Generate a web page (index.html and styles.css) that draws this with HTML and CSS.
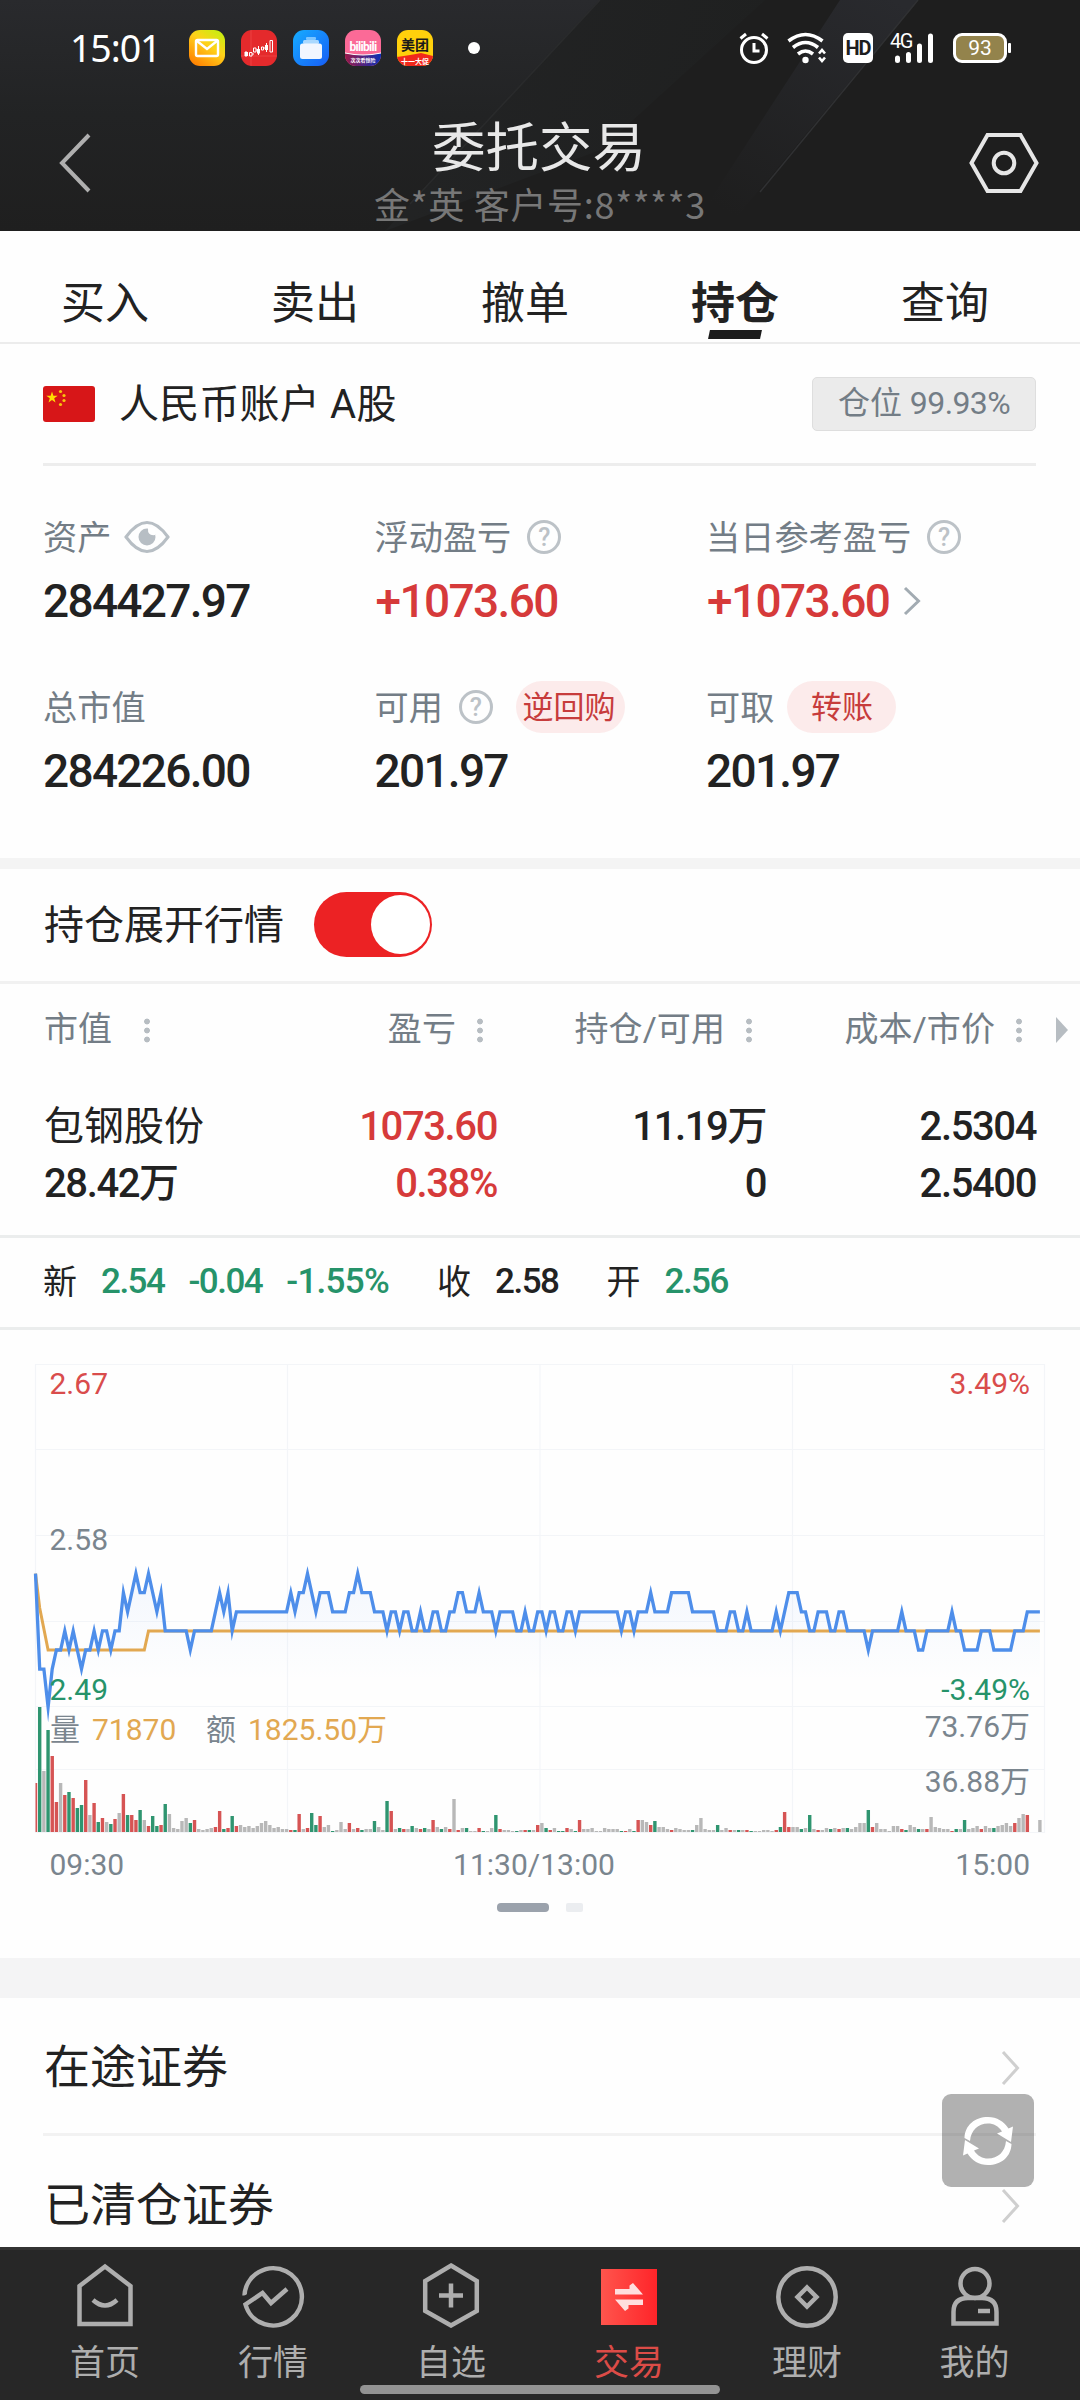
FILE: index.html
```
<!DOCTYPE html>
<html lang="zh-CN">
<head>
    <meta charset="UTF-8">
    <meta name="viewport" content="width=device-width, initial-scale=1.0">
    <title>委托交易</title>
    <link rel="stylesheet" href="styles.css">
</head>
<body>
    <div class="app">
        <header class="header">
            <svg class="header-bg" viewBox="0 0 1080 231" preserveAspectRatio="none">
                <defs>
                    <linearGradient id="bgTop" x1="0" y1="0" x2="0" y2="1">
                        <stop offset="0" stop-color="#292a2d"/>
                        <stop offset="0.5" stop-color="#222324"/>
                        <stop offset="1" stop-color="#1f1f1f"/>
                    </linearGradient>
                    <linearGradient id="bgMid" x1="0" y1="0" x2="1" y2="0.2">
                        <stop offset="0" stop-color="#232425"/>
                        <stop offset="1" stop-color="#1f2020"/>
                    </linearGradient>
                    <linearGradient id="bgRay" x1="0.9" y1="0" x2="0.3" y2="1">
                        <stop offset="0" stop-color="#292a2e"/>
                        <stop offset="1" stop-color="#1e1e1e"/>
                    </linearGradient>
                </defs>
                <rect width="1080" height="231" fill="#1e1e1e"/>
                <path d="M0 0H600L385 231H0Z" fill="url(#bgTop)"/>
                <path d="M600 0H765L600 150L385 231Z" fill="url(#bgMid)"/>
                <path d="M840 0H918L725 231H690Z" fill="url(#bgRay)"/>
                <path d="M918 0L760 192" stroke="#303133" stroke-width="1.5" fill="none"/>
                <path d="M600 0L410 204" stroke="#2a2b2c" stroke-width="1.5" fill="none"/>
            </svg>

            <div class="status-bar">
                <span class="status-time">15:01</span>
                <div class="status-apps">
                    <svg width="36" height="36" viewBox="0 0 36 36">
                        <defs>
                            <linearGradient id="mailBg" x1="0.1" y1="1" x2="0.8" y2="0">
                                <stop offset="0" stop-color="#ff7a00"/>
                                <stop offset="0.6" stop-color="#ffd21a"/>
                                <stop offset="1" stop-color="#c8ee10"/>
                            </linearGradient>
                        </defs>
                        <rect width="36" height="36" rx="11" fill="url(#mailBg)"/>
                        <rect x="7" y="10" width="22" height="16" rx="1.500" fill="none" stroke="#fff" stroke-width="2.400"/>
                        <path d="M8 11L18 19L28 11" fill="none" stroke="#fff" stroke-width="2.400"/>
                    </svg>
                    <svg width="36" height="36" viewBox="0 0 36 36">
                        <rect width="36" height="36" rx="11" fill="#e42a2c"/>
                        <path d="M10 0V36M0 26H36" stroke="#f04c4c" stroke-width="0.700"/>
                        <path d="M5 21V27M17.500 16V25M25.500 13V22M11 24H13M14.500 20H17M22.500 18H25" stroke="#fff" fill="none"/>
                        <path d="M3.500 22H7V26H3.500ZM16 19H19V23.500H16ZM24 15H27V20H24Z" fill="#fff"/>
                        <path d="M8.500 22.500H11V26H8.500ZM12.500 18H15V22H12.500ZM20.500 17H22.500V20H20.500ZM29 10.500H31.500V22H29Z" fill="#e42a2c" stroke="#fff"/>
                    </svg>
                    <svg width="36" height="36" viewBox="0 0 36 36">
                        <defs>
                            <linearGradient id="fileBg" x1="0" y1="0" x2="1" y2="1">
                                <stop offset="0" stop-color="#16adff"/>
                                <stop offset="1" stop-color="#175df6"/>
                            </linearGradient>
                        </defs>
                        <rect width="36" height="36" rx="11" fill="url(#fileBg)"/>
                        <rect x="13" y="7" width="10" height="3" rx="1" fill="#7cc5ff"/>
                        <rect x="10" y="10" width="16" height="4" rx="1.500" fill="#a9d8ff"/>
                        <rect x="7" y="13.500" width="22" height="15.500" rx="2.500" fill="#f1f6ff"/>
                    </svg>
                    <svg width="36" height="36" viewBox="0 0 36 36">
                        <defs>
                            <linearGradient id="biliBg" x1="0" y1="0" x2="1" y2="0">
                                <stop offset="0" stop-color="#9a1848"/>
                                <stop offset="1" stop-color="#0b30b5"/>
                            </linearGradient>
                            <clipPath id="biliClip"><rect width="36" height="36" rx="11"/></clipPath>
                        </defs>
                        <g clip-path="url(#biliClip)">
                            <rect width="36" height="36" fill="#fb6a97"/>
                            <path d="M0 23Q18 27 36 23V36H0Z" fill="url(#biliBg)"/>
                            <path d="M0 23Q18 27 36 23" fill="none" stroke="#fff"/>
                        </g>
                        <text class="app-bili" x="18" y="20.500" text-anchor="middle">bilibili</text>
                        <text class="app-bili-sub" x="18" y="32" text-anchor="middle">次次看惊险</text>
                    </svg>
                    <svg width="36" height="36" viewBox="0 0 36 36">
                        <defs>
                            <clipPath id="mtClip"><rect width="36" height="36" rx="11"/></clipPath>
                        </defs>
                        <g clip-path="url(#mtClip)">
                            <rect width="36" height="36" fill="#ffd00c"/>
                            <path d="M0 27Q14 25 24 23L36 26V36H0Z" fill="#f1281c"/>
                        </g>
                        <text class="app-mt" x="18" y="19.500" text-anchor="middle">美团</text>
                        <text class="app-mt-sub" x="18" y="33.500" text-anchor="middle">十一大促</text>
                    </svg>
                </div>
                <span class="status-dot"></span>

                <div class="status-right">
                    <svg width="30" height="32" viewBox="0 0 30 32">
                        <g fill="none" stroke="#fff" stroke-width="3">
                            <circle cx="15" cy="18" r="12.500"/>
                            <path d="M1.500 6.500L7 2M28.500 6.500L23 2M15 11V19H20.500"/>
                        </g>
                    </svg>
                    <svg class="icon-wifi" width="40" height="32" viewBox="0 0 40 32">
                        <g fill="none" stroke="#fff" stroke-width="3.600">
                            <path d="M1.500 9Q18.500 -4 35.500 9"/>
                            <path d="M6 15.500Q18.500 5.500 31 15.500"/>
                            <path d="M11 22Q18.500 16 26 22"/>
                            <path d="M32 21.500L35 18L38 21.500M32 25.500L35 29L38 25.500" stroke-width="2.600"/>
                        </g>
                        <circle cx="18.500" cy="28" r="3.200" fill="#fff"/>
                    </svg>
                    <span class="icon-hd">HD</span>
                    <span class="signal">
                        <span class="signal-text">4G</span>
                        <svg width="46" height="32" viewBox="0 0 46 32">
                            <path d="M8.500 28.500V26M19.500 28.500V22.500M30.500 28.500V14M41.500 28.500V4" stroke="#fff" stroke-width="5" stroke-linecap="round"/>
                        </svg>
                    </span>
                    <span class="battery">93</span>
                    <span class="battery-tip"></span>
                </div>
            </div>

            <div class="title-bar">
                <svg width="34" height="62" viewBox="0 0 34 62">
                    <path d="M31 3L4 31L31 59" fill="none" stroke="#afafaf" stroke-width="4"/>
                </svg>
                <div class="title-text">
                    <h1>委托交易</h1>
                    <p>金*英 客户号:8****3</p>
                </div>
                <svg width="70" height="62" viewBox="0 0 70 62">
                    <g fill="none" stroke="#e6e6e6" stroke-width="4">
                        <path d="M18.500 3H51.500L67.500 31L51.500 59H18.500L2.500 31Z"/>
                        <circle cx="35" cy="31" r="10.300"/>
                    </g>
                </svg>
            </div>
        </header>

        <nav class="tabs">
            <a class="tab">买入</a>
            <a class="tab">卖出</a>
            <a class="tab">撤单</a>
            <a class="tab active">持仓</a>
            <a class="tab">查询</a>
        </nav>

        <section class="account">
            <div class="account-head">
                <svg width="52" height="36" viewBox="0 0 52 36">
                    <rect width="52" height="36" rx="3" fill="#d71618"/>
                    <path d="M9 5.500L10.400 9.700H14.700L11.200 12.300L12.500 16.500L9 13.900L5.500 16.500L6.800 12.300L3.300 9.700H7.600Z" fill="#ffde00"/>
                    <g fill="#f9c50e">
                        <circle cx="17.500" cy="5.500" r="1.600"/>
                        <circle cx="21" cy="9.500" r="1.600"/>
                        <circle cx="21" cy="14.500" r="1.600"/>
                        <circle cx="17.500" cy="18.500" r="1.600"/>
                    </g>
                </svg>
                <span class="account-name">人民币账户 A股</span>
                <span class="position-badge">仓位 <b>99.93%</b></span>
            </div>

            <div class="totals">
                <div class="total">
                    <div class="total-label">
                        <span>资产</span>
                        <svg class="icon-eye" width="46" height="32" viewBox="0 0 46 32">
                            <path d="M2 16Q23 -13 44 16Q23 45 2 16Z" fill="none" stroke="#b7bec4" stroke-width="3"/>
                            <circle cx="23" cy="16" r="8.500" fill="#b7bec4"/>
                            <path d="M24 8Q23.500 15 31 14V7H24Z" fill="#fff"/>
                        </svg>
                    </div>
                    <div class="total-value">284427.97</div>
                </div>
                <div class="total">
                    <div class="total-label"><span>浮动盈亏</span><i class="help">?</i></div>
                    <div class="total-value up">+1073.60</div>
                </div>
                <div class="total">
                    <div class="total-label"><span>当日参考盈亏</span><i class="help">?</i></div>
                    <div class="total-value up">+1073.60
                        <svg class="icon-more" width="18" height="30" viewBox="0 0 18 30">
                            <path d="M2 2L15.500 15L2 28" fill="none" stroke="#a2abb2" stroke-width="3"/>
                        </svg>
                    </div>
                </div>
                <div class="total">
                    <div class="total-label"><span>总市值</span></div>
                    <div class="total-value">284226.00</div>
                </div>
                <div class="total">
                    <div class="total-label"><span>可用</span><i class="help">?</i><b class="pill pill-repo">逆回购</b></div>
                    <div class="total-value">201.97</div>
                </div>
                <div class="total">
                    <div class="total-label"><span>可取</span><b class="pill">转账</b></div>
                    <div class="total-value">201.97</div>
                </div>
            </div>
        </section>

        <section class="positions">
            <div class="expand-row">
                <span>持仓展开行情</span>
                <i class="switch"></i>
            </div>

            <div class="pos-row pos-head">
                <span class="col-first">市值<i class="dots"></i></span>
                <span>盈亏<i class="dots"></i></span>
                <span>持仓/可用<i class="dots"></i></span>
                <span>成本/市价<i class="dots"></i></span>
                <i class="arrow-right"></i>
            </div>
            <div class="pos-body">
                <div class="pos-row">
                    <span class="col-first stock-name">包钢股份</span>
                    <span class="up">1073.60</span>
                    <span>11.19万</span>
                    <span>2.5304</span>
                </div>
                <div class="pos-row">
                    <span class="col-first">28.42万</span>
                    <span class="up">0.38%</span>
                    <span>0</span>
                    <span>2.5400</span>
                </div>
            </div>

            <div class="quote">
                <span>新</span>
                <b class="down">2.54</b>
                <b class="down">-0.04</b>
                <b class="down quote-pct">-1.55%</b>
                <span class="quote-label">收</span>
                <b>2.58</b>
                <span class="quote-label">开</span>
                <b class="down">2.56</b>
            </div>
        </section>

        <section class="chart-panel">
            <svg id="chart" class="chart" width="1080" height="560" viewBox="0 1330 1080 560">
                <defs>
                    <linearGradient id="areaFill" x1="0" y1="0" x2="0" y2="1">
                        <stop offset="0" stop-color="#4a8af0" stop-opacity="0.06"/>
                        <stop offset="0.8" stop-color="#4a8af0" stop-opacity="0"/>
                    </linearGradient>
                </defs>
                <g class="grid-lines">
                    <path d="M35.500 1364.500H1044.500V1832.500H35.500Z"/>
                    <path d="M35.500 1449.500H1044.500M35.500 1535.500H1044.500M35.500 1621.500H1044.500M35.500 1706.500H1044.500M35.500 1769.500H1044.500"/>
                    <path d="M287.500 1364.500V1832.500M540 1364.500V1832.500M792.500 1364.500V1832.500"/>
                </g>
                <g id="volumeBars"></g>
                <path id="areaPath" fill="url(#areaFill)"/>
                <polyline id="avgLine" class="avg-line"/>
                <polyline id="priceLine" class="price-line"/>
                <g class="chart-text">
                    <text class="up" x="49.500" y="1393.500">2.67</text>
                    <text x="49.500" y="1549.500">2.58</text>
                    <text class="down" x="49.500" y="1699.500">2.49</text>
                    <text x="50" y="1740">量</text>
                    <text class="gold" x="92" y="1740">71870</text>
                    <text x="206" y="1740">额</text>
                    <text class="gold" x="248" y="1740">1825.50万</text>
                    <text x="49.500" y="1875">09:30</text>
                    <text x="534" y="1875" text-anchor="middle">11:30/13:00</text>
                    <g text-anchor="end">
                        <text class="up" x="1030" y="1393.500">3.49%</text>
                        <text class="down" x="1030" y="1699.500">-3.49%</text>
                        <text x="1030" y="1737">73.76万</text>
                        <text x="1030" y="1791.500">36.88万</text>
                        <text x="1030" y="1875">15:00</text>
                    </g>
                </g>
            </svg>
            <div class="pager">
                <span class="page current"></span>
                <span class="page"></span>
            </div>
        </section>

        <section class="links">
            <a class="link-row">
                <span>在途证券</span>
                <svg width="19" height="36" viewBox="0 0 19 36">
                    <path d="M2 2L16.500 18L2 34" fill="none" stroke="#cfcfcf" stroke-width="3"/>
                </svg>
            </a>
            <a class="link-row">
                <span>已清仓证券</span>
                <svg width="19" height="36" viewBox="0 0 19 36">
                    <path d="M2 2L16.500 18L2 34" fill="none" stroke="#cfcfcf" stroke-width="3"/>
                </svg>
            </a>
        </section>

        <button class="refresh">
            <svg width="54" height="50" viewBox="0 0 54 50">
                <g fill="#fff">
                    <path d="M3.500 22C4 9 14 1 27 1C36 1 43 5.500 47.500 12.500L52 10.500L50 26L36 17.500L41 15.500C37.500 10 32.500 7.500 27 7.500C17 7.500 10 14 9 25Z"/>
                    <path d="M50.500 28C50 41 40 49 27 49C18 49 11 44.500 6.500 37.500L2 39.500L4 24L18 32.500L13 34.500C16.500 40 21.500 42.500 27 42.500C37 42.500 44 36 45 25Z"/>
                </g>
            </svg>
        </button>

        <footer class="tabbar">
            <a class="tabbar-item">
                <svg width="64" height="66" viewBox="0 0 64 66">
                    <g fill="none" stroke="#aeaeae" stroke-width="4.500">
                        <path d="M6.500 24L32 4.500L57.500 24V62H6.500Z"/>
                        <path d="M20 38Q32 49 44 38"/>
                    </g>
                </svg>
                首页
            </a>
            <a class="tabbar-item">
                <svg width="64" height="66" viewBox="0 0 64 66">
                    <g fill="none" stroke="#aeaeae" stroke-width="4.500">
                        <path d="M3.500 33.500A28.700 28.700 0 1 1 4.500 42.500L21.500 31L30 41L46 27"/>
                    </g>
                    <path d="M0 36L7 31.500V37L0 42Z" fill="#272727"/>
                </svg>
                行情
            </a>
            <a class="tabbar-item">
                <svg width="64" height="66" viewBox="0 0 64 66">
                    <g fill="none" stroke="#aeaeae" stroke-width="4.500">
                        <path d="M32 3.500L57.800 19V49L32 63.500L6.200 49V19Z"/>
                        <path d="M32 21.500V45.500M20 33.500H44"/>
                    </g>
                </svg>
                自选
            </a>
            <a class="tabbar-item active">
                <svg width="64" height="66" viewBox="0 0 64 66">
                    <defs>
                        <linearGradient id="tradeBg" x1="0" y1="0" x2="1" y2="0">
                            <stop offset="0" stop-color="#ff554d"/>
                            <stop offset="1" stop-color="#ff2429"/>
                        </linearGradient>
                    </defs>
                    <rect x="4" y="7" width="56" height="56" fill="url(#tradeBg)"/>
                    <path d="M18 27H32.500V23.500L36 21L46 32.500H18ZM46 43H31.500V46.500L28 49L18 37.500H46Z" fill="#ffdede"/>
                </svg>
                交易
            </a>
            <a class="tabbar-item">
                <svg width="64" height="66" viewBox="0 0 64 66">
                    <g fill="none" stroke="#aeaeae" stroke-width="4.500">
                        <circle cx="32" cy="35" r="28.700"/>
                        <path d="M32 25.500L41.500 35L32 44.500L22.500 35Z"/>
                    </g>
                </svg>
                理财
            </a>
            <a class="tabbar-item">
                <svg width="64" height="66" viewBox="0 0 64 66">
                    <g fill="none" stroke="#aeaeae" stroke-width="4.500">
                        <circle cx="32" cy="21.500" r="14.500"/>
                        <path d="M10.500 61.500V50Q10.500 36 25 36H39Q53.500 36 53.500 50V61.500Z"/>
                        <path d="M35 49H47"/>
                    </g>
                </svg>
                我的
            </a>
            <span class="home-indicator"></span>
        </footer>
    </div>

    <script src="chart.js"></script>
</body>
</html>
```
FILE: styles.css
```
* {
    margin: 0;
    padding: 0;
    box-sizing: border-box;
}

body {
    width: 1080px;
    height: 2400px;
    overflow: hidden;
    background: #fefefe;
    color: #222;
    font-family: Roboto, "Noto Sans CJK SC", sans-serif;
}

svg {
    display: block;
    flex: none;
}

i {
    font-style: normal;
}

.app {
    position: relative;
    display: flex;
    flex-direction: column;
    height: 2400px;
}

.up {
    color: #d63a3a;
    fill: #d94c4c;
}

.down {
    color: #26936a;
    fill: #26936a;
}

/* header */
.header {
    position: relative;
    height: 231px;
    flex: none;
}

.header-bg {
    position: absolute;
    width: 1080px;
    height: 231px;
    z-index: -1;
}

.status-bar {
    display: flex;
    align-items: center;
    height: 96px;
    padding: 0 69px 0 70px;
}

.status-time {
    width: 119px;
    padding-bottom: 2px;
    color: #fff;
    font-family: "Noto Sans", sans-serif;
    font-size: 37.5px;
    letter-spacing: -1.1px;
}

.status-apps {
    display: flex;
    gap: 16px;
}

.app-bili {
    font-size: 12px;
    font-weight: 700;
    fill: #fff;
    letter-spacing: -0.7px;
}

.app-bili-sub {
    font-size: 5px;
    font-weight: 700;
    fill: #fff;
}

.app-mt {
    font-size: 14px;
    font-weight: 700;
    fill: #1a1a1a;
}

.app-mt-sub {
    font-size: 7px;
    font-weight: 700;
    fill: #fff;
}

.status-dot {
    width: 12px;
    height: 12px;
    margin-left: 35px;
    border-radius: 50%;
    background: #fff;
}

.status-right {
    display: flex;
    align-items: center;
    margin-left: auto;
}

.icon-wifi {
    margin-left: 18px;
}

.icon-hd {
    width: 30px;
    height: 30px;
    margin-left: 16px;
    border-radius: 5px;
    background: #fff;
    color: #1e1e1e;
    font-size: 20px;
    font-weight: 700;
    line-height: 31px;
    text-align: center;
    letter-spacing: -1px;
}

.signal {
    position: relative;
    margin-left: 16px;
}

.signal-text {
    position: absolute;
    left: 1px;
    top: -3px;
    color: #fff;
    font-size: 20px;
    line-height: 24px;
    letter-spacing: -1.5px;
}

.battery {
    width: 54px;
    height: 30px;
    margin-left: 18px;
    border: 3px solid #fff;
    border-radius: 9px;
    background: #93834c;
    color: #fff;
    font-size: 21px;
    line-height: 25px;
    text-align: center;
}

.battery-tip {
    width: 3px;
    height: 10px;
    margin-left: 1px;
    border-radius: 1px;
    background: #fff;
}

.title-bar {
    display: flex;
    justify-content: space-between;
    align-items: center;
    height: 134px;
    padding: 0 41px 0 58px;
}

.title-text {
    margin-left: 19px;
    padding-top: 19px;
    text-align: center;
}

.title-text h1 {
    color: #e8e8e8;
    font-size: 53.5px;
    font-weight: 400;
    line-height: 60px;
    margin-right: 2px;
}

.title-text p {
    color: #777;
    font-family: "Noto Sans CJK SC", sans-serif;
    font-size: 36px;
    line-height: 48px;
    letter-spacing: 0.7px;
}

/* tabs */
.tabs {
    display: flex;
    height: 113px;
    padding-top: 35px;
    border-bottom: 2px solid #ececec;
    flex: none;
}

.tab {
    position: relative;
    width: 210px;
    font-size: 44px;
    line-height: 76px;
    text-align: center;
}

.tab.active {
    font-weight: 700;
}

.tab.active::after {
    content: "";
    position: absolute;
    left: 79px;
    bottom: 3px;
    width: 52px;
    height: 9px;
    background: #1c1c1c;
    transform: skewX(-12deg);
}

/* account */
.account {
    height: 514px;
    flex: none;
}

.account-head {
    display: flex;
    align-items: center;
    height: 122px;
    margin: 0 44px 0 43px;
    border-bottom: 3px solid #ededed;
}

.account-name {
    margin-left: 24px;
    padding-bottom: 5px;
    font-size: 40px;
    letter-spacing: 0.2px;
}

.position-badge {
    width: 224px;
    height: 54px;
    margin-left: auto;
    border: 1px solid #dedede;
    border-radius: 5px;
    background: #ebebeb;
    color: #737d86;
    font-size: 32px;
    line-height: 51px;
    text-align: center;
}

.position-badge b {
    font-weight: 400;
    letter-spacing: -0.6px;
}

.totals {
    display: grid;
    grid-template-columns: repeat(3, 331.5px);
    grid-auto-rows: 170px;
    padding: 43px 0 0 43px;
}

.total-label {
    display: flex;
    align-items: center;
    height: 56px;
    color: #737d86;
    font-size: 34.2px;
}

.total-label span {
    padding-bottom: 5px;
}

.total-value {
    display: flex;
    align-items: center;
    height: 72px;
    font-size: 46px;
    font-weight: 500;
    letter-spacing: -1.7px;
}

.total-value.up {
    padding-left: 1px;
    letter-spacing: -1.6px;
}

.icon-eye {
    margin-left: 13px;
}

.icon-more {
    margin-left: 14px;
}

.help {
    width: 34px;
    height: 34px;
    margin-left: 16px;
    border: 3px solid #bcc2c7;
    border-radius: 50%;
    color: #bcc2c7;
    font-size: 25px;
    font-weight: 500;
    line-height: 29px;
    text-align: center;
}

.pill {
    width: 109px;
    height: 52px;
    margin-left: 13px;
    border-radius: 26px;
    background: #fcebeb;
    color: #c73c3c;
    font-size: 31px;
    font-weight: 400;
    line-height: 53px;
    text-align: center;
}

.pill-repo {
    margin-left: 23px;
    padding-right: 3px;
}

/* positions */
.positions {
    height: 472px;
    border-top: 11px solid #f4f4f4;
    flex: none;
}

.expand-row {
    display: flex;
    align-items: center;
    height: 115px;
    padding: 0 0 1px 44px;
    border-bottom: 3px solid #f1f1f1;
    font-size: 40px;
}

.expand-row span {
    padding-bottom: 5px;
}

.switch {
    width: 118px;
    height: 65px;
    margin-left: 30px;
    padding: 3px 2px 3px 3px;
    border-radius: 33px;
    background: #ec2224;
}

.switch::after {
    content: "";
    display: block;
    width: 59px;
    height: 59px;
    margin-left: auto;
    border-radius: 50%;
    background: #fff;
}

.pos-row {
    display: grid;
    grid-template-columns: 153px 300px 269px 270px;
    padding-left: 44px;
    text-align: right;
    font-size: 40px;
    font-weight: 500;
    line-height: 57px;
    letter-spacing: -1.4px;
}

.pos-row .col-first {
    text-align: left;
    white-space: nowrap;
}

.pos-row .stock-name {
    font-weight: 400;
    letter-spacing: 0;
}

.pos-head {
    position: relative;
    height: 92px;
    color: #737d86;
    font-size: 34px;
    font-weight: 400;
    line-height: 90px;
    letter-spacing: 0.1px;
}

.dots {
    display: inline-block;
    width: 6px;
    height: 25px;
    margin-left: 21px;
    margin-right: 14px;
    vertical-align: -2px;
    background: radial-gradient(circle, #b7bdc2 2.5px, transparent 3.3px) 0 -1px / 6px 9px;
}

.col-first .dots {
    margin-left: 32px;
}

.arrow-right {
    position: absolute;
    left: 1056px;
    top: 33px;
    border: solid transparent;
    border-width: 13px 0 13px 12px;
    border-left-color: #b7bdc2;
}

.pos-body {
    height: 162px;
    padding-top: 22px;
    border-bottom: 3px solid #ebeded;
}

.quote {
    display: flex;
    align-items: center;
    gap: 24px;
    height: 92px;
    padding: 0 0 3px 43px;
    border-bottom: 3px solid #ebeded;
    font-size: 34px;
}

.quote span {
    padding-bottom: 3px;
}

.quote b {
    font-weight: 500;
    font-size: 35px;
    letter-spacing: -1.5px;
}

.quote .quote-pct {
    letter-spacing: -0.7px;
}

.quote-label {
    margin-left: 24px;
}

/* chart */
.chart-panel {
    height: 668px;
    border-bottom: 40px solid #f4f4f5;
    flex: none;
}

.grid-lines {
    fill: none;
    stroke: #f3f5f8;
    stroke-width: 1.2;
}

.price-line {
    fill: none;
    stroke: #4e8eea;
    stroke-width: 3.3;
    stroke-miterlimit: 10;
}

.avg-line {
    fill: none;
    stroke: #e2a851;
    stroke-width: 3;
}

.chart-text {
    font-size: 30px;
    fill: #7a858e;
}

.gold {
    fill: #e2a851;
}

.bar-up {
    fill: #d65454;
}

.bar-down {
    fill: #2f9570;
}

.bar-flat {
    fill: #b8b8b8;
}

.pager {
    display: flex;
    gap: 17px;
    padding: 13px 0 0 497px;
}

.page {
    width: 17px;
    height: 9px;
    border-radius: 2px;
    background: #ebedf0;
}

.page.current {
    width: 52px;
    border-radius: 4px;
    background: #9ba2ac;
}

/* links */
.links {
    padding: 0 44px 0 43px;
    height: 249px;
    overflow: hidden;
    flex: none;
}

.link-row {
    display: flex;
    justify-content: space-between;
    align-items: center;
    height: 138px;
    padding: 4px 16px 0 1px;
    border-bottom: 3px solid #f2f2f2;
    font-size: 46px;
}

.link-row span {
    padding-bottom: 10px;
}

.refresh {
    position: absolute;
    left: 942px;
    top: 2094px;
    display: flex;
    align-items: center;
    justify-content: center;
    width: 92px;
    height: 93px;
    border: none;
    border-radius: 9px;
    background: rgba(0, 0, 0, 0.3);
}

/* bottom bar */
.tabbar {
    position: relative;
    display: grid;
    grid-template-columns: 158px repeat(4, 178px) 157px;
    height: 153px;
    padding: 12px 26px 0;
    border-top: 3px solid #333;
    background: #272727;
}

.tabbar-item {
    display: flex;
    flex-direction: column;
    align-items: center;
    gap: 11px;
    color: #aeaeae;
    font-size: 35px;
    line-height: 50px;
}

.tabbar-item.active {
    color: #dc4c47;
}

.home-indicator {
    position: absolute;
    left: 360px;
    bottom: 6px;
    width: 360px;
    height: 9px;
    border-radius: 5px;
    background: #939393;
}
```
FILE: chart.js
```
// 分时图：价格以 [分钟, 价格] 记录拐点
const price = [
    [0, 2.56], [1, 2.51], [2, 2.51], [3, 2.49], [4, 2.51], [5, 2.52], [6, 2.52], [7, 2.53], [8, 2.52], [9, 2.53],
    [10, 2.52], [11, 2.51], [12, 2.52], [13, 2.52], [14, 2.53], [15, 2.52], [16, 2.53], [17, 2.53], [18, 2.52], [19, 2.53],
    [20, 2.53], [21, 2.55], [22, 2.54], [24, 2.56], [25, 2.55], [26, 2.55], [27, 2.56], [29, 2.54], [30, 2.55], [31, 2.53],
    [36, 2.53], [37, 2.52], [38, 2.53], [42, 2.53], [44, 2.55], [45, 2.54], [46, 2.55], [47, 2.53], [48, 2.54], [60, 2.54],
    [61, 2.55], [62, 2.54], [63, 2.55], [64, 2.55], [65, 2.56], [67, 2.54], [68, 2.55], [70, 2.55], [71, 2.54], [74, 2.54],
    [75, 2.55], [76, 2.55], [77, 2.56], [78, 2.55], [80, 2.55], [81, 2.54], [83, 2.54], [84, 2.53], [85, 2.54], [86, 2.54],
    [87, 2.53], [88, 2.54], [89, 2.54], [90, 2.53], [91, 2.53], [92, 2.54], [93, 2.53], [94, 2.53], [95, 2.54], [96, 2.54],
    [97, 2.53], [98, 2.53], [99, 2.54], [100, 2.54], [101, 2.55], [102, 2.55], [103, 2.54], [105, 2.54], [106, 2.55], [107, 2.54],
    [109, 2.54], [110, 2.53], [111, 2.54], [114, 2.54], [115, 2.53], [116, 2.53], [117, 2.54], [118, 2.53], [119, 2.53], [120, 2.54],
    [121, 2.54], [122, 2.53], [123, 2.54], [124, 2.54], [125, 2.53], [126, 2.53], [127, 2.54], [128, 2.54], [129, 2.53], [130, 2.54],
    [139, 2.54], [140, 2.53], [141, 2.54], [142, 2.54], [143, 2.53], [144, 2.54], [146, 2.54], [147, 2.55], [148, 2.54], [151, 2.54],
    [152, 2.55], [156, 2.55], [157, 2.54], [162, 2.54], [163, 2.53], [165, 2.53], [166, 2.54], [167, 2.54], [168, 2.53], [169, 2.53],
    [170, 2.54], [171, 2.53], [176, 2.53], [177, 2.54], [178, 2.53], [180, 2.55], [182, 2.55], [183, 2.54], [184, 2.54], [185, 2.53],
    [186, 2.53], [187, 2.54], [189, 2.54], [190, 2.53], [191, 2.53], [192, 2.54], [193, 2.54], [194, 2.53], [198, 2.53], [199, 2.52],
    [200, 2.53], [206, 2.53], [207, 2.54], [208, 2.53], [210, 2.53], [211, 2.52], [212, 2.52], [213, 2.53], [218, 2.53], [219, 2.54],
    [220, 2.53], [221, 2.53], [222, 2.52], [225, 2.52], [226, 2.53], [228, 2.53], [229, 2.52], [233, 2.52], [234, 2.53], [236, 2.53],
    [237, 2.54], [240, 2.54]
];

const average = [[0, 2.56], [1, 2.542], [3, 2.52], [26, 2.52], [27, 2.53], [240, 2.53]];

// 每分钟成交量：r 涨 / g 跌 / n 平，数字为柱高
const volume = `
r49 g125 n61 g102 r76 r30 n49 r37 g40 r34 g24 g27 r52 n17 r29 g10 r14 n10 g8 r13
n19 r38 g17 r17 r12 g22 n12 r6 g16 g6 r7 g28 n18 n4 n3 n11 n14 g9 r12 n3
n2 n3 n4 r5 r21 g3 r4 g16 r6 n7 n5 n6 n4 n6 n9 n11 n7 n4 n5 n3
n3 r2 g2 r18 n3 r4 g19 g7 r16 n5 n7 g1 n2 n10 n3 r9 n3 r4 g2 n3
n3 g11 n5 n2 g31 r21 n3 g4 r3 n3 g6 n4 r3 g4 n3 r12 n5 g3 n5 r3
n33 r2 n4 g4 n1 n1 r4 g1 n1 n4 g17 r3 n2 n2 n1 g1 n2 r2 g2 n2
r7 n9 g4 r2 n4 g1 g1 r4 n3 g1 r12 n3 n3 n4 n1 n1 n4 n3 n3 n3
g1 r1 n3 g1 r12 n12 n10 r7 g11 n5 n5 n3 r2 n4 n3 n2 n2 g2 n7 n14
n3 n2 n2 g7 n2 n4 r2 n2 g2 n2 r2 g1 n1 n1 n2 n2 n1 r2 g5 r20
r5 n5 n5 g3 n4 g17 n3 r2 n2 n4 g3 n4 r3 n4 g4 n3 n5 n9 n9 g22
r5 n9 n3 n3 n1 n6 n6 r3 g2 n7 n5 g3 n3 r3 n15 n5 n4 n3 n3 r1
g3 n3 g12 n3 n4 n6 r3 n6 n4 g4 n6 n7 n9 n6 r9 n14 n18 r17 n0 n0
n12`.trim().split(/\s+/);

const LEFT = 35.5;
const STEP = 4.185;
const BASE_Y = 1535.4;  // 昨收 2.58
const TICK = 1910;      // 每元像素
const VOLUME_Y = 1832;

function toPoint([minute, value]) {
    const x = LEFT + minute * STEP;
    const y = BASE_Y + (2.58 - value) * TICK;
    return `${x.toFixed(1)},${y.toFixed(1)}`;
}

const pricePoints = price.map(toPoint);
document.getElementById('priceLine').setAttribute('points', pricePoints.join(' '));
document.getElementById('avgLine').setAttribute('points', average.map(toPoint).join(' '));
document.getElementById('areaPath').setAttribute('d', `M${LEFT},1706L${pricePoints.join('L')}L1040,1706Z`);

const barClass = { r: 'bar-up', g: 'bar-down', n: 'bar-flat' };
const bars = document.getElementById('volumeBars');

volume.forEach((item, i) => {
    const height = Number(item.slice(1));
    const rect = document.createElementNS('http://www.w3.org/2000/svg', 'rect');
    rect.setAttribute('x', Math.max(LEFT, LEFT + i * STEP - 1.7));
    rect.setAttribute('y', VOLUME_Y - height);
    rect.setAttribute('width', i === 0 ? 1.7 : 3.4);
    rect.setAttribute('height', height);
    rect.setAttribute('class', barClass[item[0]]);
    bars.appendChild(rect);
});
```
